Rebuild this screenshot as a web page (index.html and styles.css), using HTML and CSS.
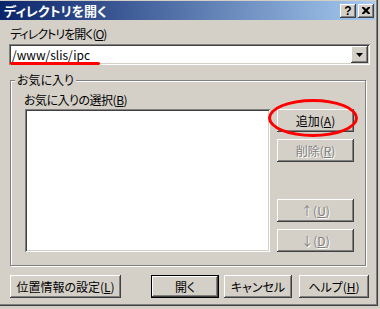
FILE: index.html
```html
<!DOCTYPE html>
<html lang="ja">
<head>
    <meta charset="UTF-8">
    <title>ディレクトリを開く</title>
    <link rel="stylesheet" href="styles.css">
</head>
<body>
    <div class="dialog">
        <div class="titlebar">
            <span class="title">ディレクトリを開く</span>
            <div class="caption-buttons">
                <span class="cap-btn">?</span>
                <span class="cap-btn">
                    <svg width="8" height="7" viewBox="0 0 8 7"><path d="M0 0h2l2 2 2-2h2v1L5.5 3.5 8 6v1H6L4 5 2 7H0V6l2.5-2.5L0 1z" fill="#000"/></svg>
                </span>
            </div>
        </div>

        <div class="content">
            <div class="label dir-label">ディレクトリを開く(<u>O</u>)</div>
            <div class="combo">
                <span class="combo-text">/www/slis/ipc</span>
                <span class="combo-btn">
                    <svg width="7" height="4" viewBox="0 0 7 4"><path d="M0 0h7L3.5 4z" fill="#000"/></svg>
                </span>
                <span class="mark-line"></span>
            </div>

            <div class="group">
                <span class="group-title">お気に入り</span>
                <div class="label fav-label">お気に入りの選択(<u>B</u>)</div>
                <div class="fav-row">
                    <div class="listbox"></div>
                    <div class="side-buttons">
                        <button class="btn">追加(<u>A</u>)</button>
                        <span class="mark-ring"></span>
                        <button class="btn" disabled>削除(<u>R</u>)</button>
                        <button class="btn push-down" disabled>↑(<u>U</u>)</button>
                        <button class="btn" disabled>↓(<u>D</u>)</button>
                    </div>
                </div>
            </div>

            <div class="footer">
                <button class="btn btn-location">位置情報の設定(<u>L</u>)</button>
                <button class="btn btn-default">開く</button>
                <button class="btn btn-cancel">キャンセル</button>
                <button class="btn btn-help">ヘルプ(<u>H</u>)</button>
            </div>
        </div>
    </div>
</body>
</html>
```

FILE: styles.css
```css
* {
    box-sizing: border-box;
}
body {
    margin: 0;
    background: #d4d0c8;
    font-family: "Noto Sans CJK JP", "Liberation Sans", sans-serif;
    font-size: 12px;
    font-feature-settings: "palt";
    color: #000;
}
.dialog {
    position: relative;
    width: 378px;
    height: 306px;
    padding: 1px 3px 3px 0;
    background: #d4d0c8;
    box-shadow: inset -1px -1px #404040, inset -2px -2px #808080;
}

/* title bar */
.titlebar {
    height: 19px;
    display: flex;
    align-items: center;
    justify-content: space-between;
    padding: 0 1px 0 4px;
    background: linear-gradient(to right, #0a246a, #a6caf0);
}
.title {
    color: #fff;
    font-weight: bold;
    font-size: 13px;
    line-height: 15px;
}
.caption-buttons {
    display: flex;
    gap: 2px;
}
.cap-btn {
    width: 16px;
    height: 14px;
    display: flex;
    align-items: center;
    justify-content: center;
    background: #d4d0c8;
    font-family: "Liberation Sans", sans-serif;
    font-weight: bold;
    font-size: 12px;
    line-height: 12px;
    box-shadow: inset -1px -1px #404040, inset 1px 1px #fff, inset -2px -2px #808080;
}

/* common controls */
.label {
    height: 14px;
    line-height: 14px;
}
.btn {
    display: flex;
    align-items: center;
    justify-content: center;
    height: 23px;
    padding: 0;
    border: none;
    background: #d4d0c8;
    font: inherit;
    color: #000;
    box-shadow: inset -1px -1px #404040, inset 1px 1px #fff, inset -2px -2px #808080;
}
.btn:disabled {
    color: #808080;
    text-shadow: 1px 1px #fff;
}
.btn-default {
    box-shadow: inset 0 0 0 1px #000, inset -2px -2px #404040, inset 2px 2px #fff, inset -3px -3px #808080;
}

/* directory field */
.dir-label {
    margin: 7px 0 0 10px;
    letter-spacing: -1px;
}
.combo {
    position: relative;
    display: flex;
    align-items: center;
    justify-content: space-between;
    width: 361px;
    height: 21px;
    margin: 3px 0 0 9px;
    padding: 2px;
    background: #fff;
    box-shadow: inset 1px 1px #808080, inset -1px -1px #fff, inset 2px 2px #404040, inset -2px -2px #d4d0c8;
}
.combo-text {
    padding-left: 1px;
    line-height: 14px;
}
.combo-btn {
    width: 17px;
    height: 17px;
    display: flex;
    align-items: center;
    justify-content: center;
    background: #d4d0c8;
    box-shadow: inset -1px -1px #404040, inset 1px 1px #fff, inset -2px -2px #808080;
}
.mark-line {
    position: absolute;
    left: 1px;
    top: 18px;
    width: 90px;
    height: 3px;
    border-radius: 2px;
    background: #f00;
}

/* favourites group */
.group {
    position: relative;
    width: 356px;
    height: 186px;
    margin: 15px 0 0 10px;
    border: 1px solid #808080;
    box-shadow: inset 1px 1px #fff, 1px 1px #fff;
}
.group-title {
    position: absolute;
    left: 4px;
    top: -8px;
    padding: 0 2px;
    line-height: 14px;
    background: #d4d0c8;
}
.fav-label {
    margin: 12px 0 0 13px;
    letter-spacing: -0.5px;
}
.fav-row {
    display: flex;
    margin: 2px 0 0 14px;
}
.listbox {
    width: 245px;
    height: 143px;
    background: #fff;
    box-shadow: inset 1px 1px #808080, inset -1px -1px #fff, inset 2px 2px #404040, inset -2px -2px #d4d0c8;
}
.side-buttons {
    position: relative;
    display: flex;
    flex-direction: column;
    gap: 7px;
    width: 77px;
    margin-left: 7px;
}
.push-down {
    margin-top: auto;
}
.mark-ring {
    position: absolute;
    left: -9px;
    top: -10px;
    width: 90px;
    height: 38px;
    border: 3px solid #f00;
    border-radius: 50%;
}

/* bottom buttons */
.footer {
    display: flex;
    margin: 9px 0 0 10px;
}
.btn-location {
    width: 111px;
    margin-right: 30px;
}
.btn-default {
    width: 68px;
    margin-right: 5px;
}
.btn-cancel {
    width: 68px;
    margin-right: 7px;
}
.btn-help {
    width: 70px;
}
```
